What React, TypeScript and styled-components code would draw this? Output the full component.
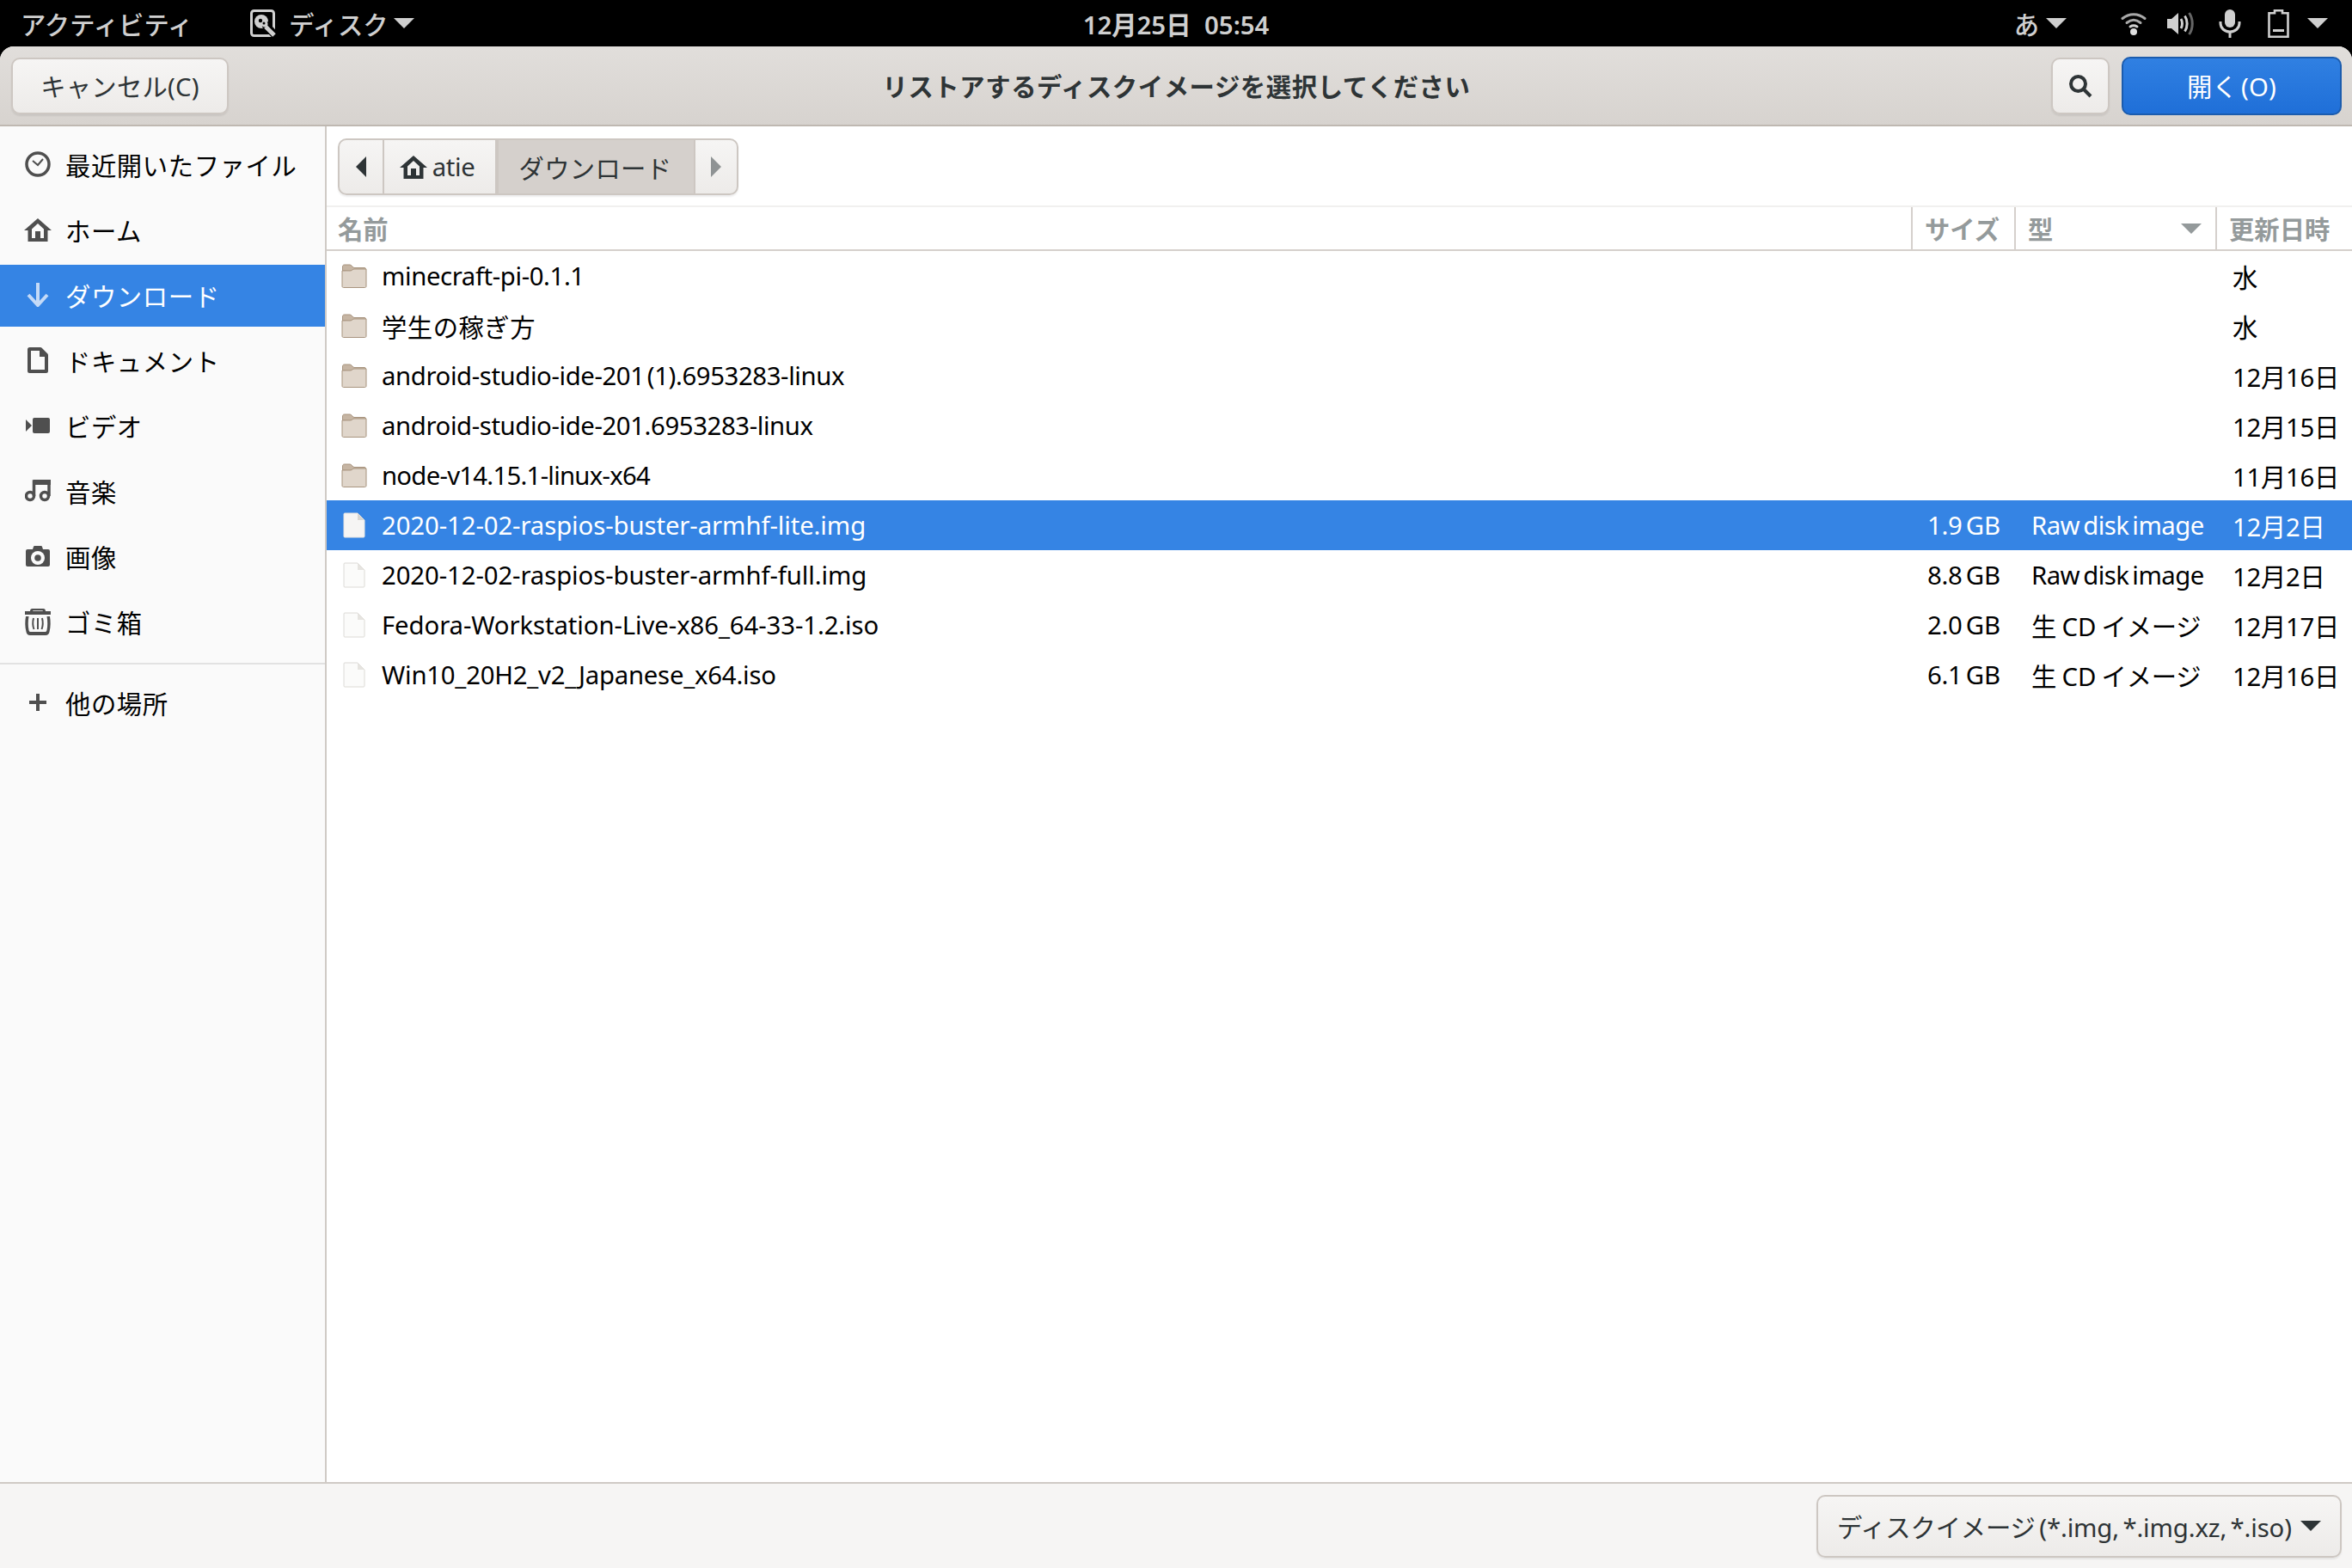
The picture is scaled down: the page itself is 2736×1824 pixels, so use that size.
import React from 'react';
import styled, { createGlobalStyle } from 'styled-components';

const GlobalStyle = createGlobalStyle`
  html, body {
    margin: 0;
    padding: 0;
    background: #000;
  }
  * {
    box-sizing: border-box;
  }
  svg {
    flex: none;
    display: block;
  }
  body {
    font-family: "Noto Sans", "Noto Sans CJK JP", sans-serif;
    font-size: 29.33px;
    color: #000;
  }
`;

const Screen = styled.div`
  width: 2736px;
  height: 1824px;
  display: flex;
  flex-direction: column;
  overflow: hidden;
  background: #000;
`;

const TopBar = styled.div`
  height: 54px;
  flex: none;
  display: grid;
  grid-template-columns: 1fr auto 1fr;
  align-items: center;
  color: #cfcfcf;
  font-size: 29.33px;
  font-weight: 500;
`;

const TopLeft = styled.div`
  display: flex;
  align-items: center;
  padding-left: 24px;
`;

const AppMenu = styled.div`
  display: flex;
  align-items: center;
  margin-left: 67px;
`;

const Clock = styled.div`
  font-weight: 600;
  word-spacing: 8px;
`;

const Tray = styled.div`
  display: flex;
  align-items: center;
  justify-content: flex-end;
  padding-right: 28px;
`;

const Arrow = styled.span<{ $size?: number; $color?: string }>`
  display: inline-block;
  flex: none;
  width: 0;
  height: 0;
  border-left: ${(p) => p.$size ?? 12}px solid transparent;
  border-right: ${(p) => p.$size ?? 12}px solid transparent;
  border-top: ${(p) => p.$size ?? 12}px solid ${(p) => p.$color ?? '#cfcfcf'};
`;

const BarItem = styled.span<{ $left: number }>`
  display: flex;
  align-items: center;
  margin-left: ${(p) => p.$left}px;
`;

const Window = styled.div`
  flex: 1;
  min-height: 0;
  display: flex;
  flex-direction: column;
  background: #fff;
  border-radius: 16px 16px 0 0;
  overflow: hidden;
`;

const HeaderBar = styled.div`
  height: 93px;
  flex: none;
  display: grid;
  grid-template-columns: 1fr auto 1fr;
  align-items: center;
  padding: 0 12px 0 13px;
  background: linear-gradient(#e1dedb, #d7d3cf);
  border-bottom: 2px solid #bfb8b1;
  color: #2e3436;
`;

const HeaderTitle = styled.div`
  font-weight: 700;
  letter-spacing: 0.6px;
`;

const HeaderRight = styled.div`
  display: flex;
  justify-content: flex-end;
  align-items: center;
  gap: 14px;
`;

const Button = styled.div<{ $width: number }>`
  width: ${(p) => p.$width}px;
  height: 66px;
  display: flex;
  align-items: center;
  justify-content: center;
  border: 2px solid #cdc7c2;
  border-radius: 10px;
  background: linear-gradient(#f6f5f4, #edebe9);
  box-shadow: 0 2px 2px rgba(0, 0, 0, 0.07);
  color: #2e3436;
  letter-spacing: 0.2px;
`;

const OpenButton = styled(Button)`
  height: 68px;
  background: linear-gradient(#3080e2, #1f6fd8);
  border-color: #1b5cae;
  color: #fff;
  box-shadow: none;
  word-spacing: -4px;
`;

const Body = styled.div`
  flex: 1;
  min-height: 0;
  display: flex;
`;

const Sidebar = styled.div`
  width: 380px;
  flex: none;
  background: #fafafa;
  border-right: 2px solid #cfcac5;
  padding-top: 9px;
`;

const Place = styled.div<{ $active?: boolean }>`
  height: 72px;
  margin-bottom: 4px;
  padding: 0 0 2px 28px;
  display: flex;
  align-items: center;
  gap: 16px;
  background: ${(p) => (p.$active ? '#3584e4' : 'transparent')};
  color: ${(p) => (p.$active ? '#fff' : '#000')};
  letter-spacing: 0.6px;
`;

const PlaceIcon = styled.span<{ $active?: boolean }>`
  width: 32px;
  height: 32px;
  flex: none;
  display: flex;
  align-items: center;
  justify-content: center;
  color: ${(p) => (p.$active ? '#c4daf7' : '#4f4f4f')};
`;

const PlaceDivider = styled.div`
  height: 2px;
  margin: 11px 0 9px;
  background: #e2e2e2;
`;

const Main = styled.div`
  flex: 1;
  min-width: 0;
  display: flex;
  flex-direction: column;
`;

const PathArea = styled.div`
  height: 94px;
  flex: none;
  padding: 14px 13px;
  border-bottom: 2px solid #f1f0ef;
`;

const PathBar = styled.div`
  display: inline-flex;
  height: 66px;
  border: 2px solid #cdc7c2;
  border-radius: 10px;
  overflow: hidden;
  background: linear-gradient(#f6f5f4, #edebe9);
  box-shadow: 0 2px 2px rgba(0, 0, 0, 0.07);
  color: #2e3436;
`;

const PathArrow = styled.div<{ $width: number }>`
  width: ${(p) => p.$width}px;
  display: flex;
  align-items: center;
  justify-content: center;
`;

const Crumb = styled.div<{ $width: number; $active?: boolean }>`
  width: ${(p) => p.$width}px;
  display: flex;
  align-items: center;
  justify-content: center;
  gap: 6px;
  padding-right: ${(p) => (p.$active ? 2 : 6)}px;
  border-left: 2px solid #cdc7c2;
  border-right: 2px solid #cdc7c2;
  background: ${(p) => (p.$active ? '#d5d0cc' : 'transparent')};
  letter-spacing: ${(p) => (p.$active ? 0.3 : -0.4)}px;
`;

const Triangle = styled.span<{ $dir: 'left' | 'right'; $color: string }>`
  width: 0;
  height: 0;
  border-top: 12px solid transparent;
  border-bottom: 12px solid transparent;
  ${(p) =>
    p.$dir === 'left'
      ? `border-right: 12px solid ${p.$color};`
      : `border-left: 12px solid ${p.$color};`}
`;

const ColumnHeader = styled.div`
  height: 51px;
  flex: none;
  display: grid;
  grid-template-columns: 1845px 120px 234px 1fr;
  border-bottom: 2px solid #d5d0cc;
  color: #949a9b;
  font-weight: 700;
`;

const HeaderCell = styled.div<{ $pad: number }>`
  display: flex;
  align-items: center;
  justify-content: space-between;
  padding-left: ${(p) => p.$pad}px;
  padding-right: 16px;
  border-right: 2px solid #d5d0cc;
  &:last-child {
    border-right: 0;
  }
`;

const FileList = styled.div`
  flex: 1;
  min-height: 0;
`;

const FileRow = styled.div<{ $selected?: boolean }>`
  height: 58px;
  display: grid;
  grid-template-columns: 1845px 120px 234px 1fr;
  align-items: center;
  background: ${(p) => (p.$selected ? '#3584e4' : 'transparent')};
  color: ${(p) => (p.$selected ? '#fff' : '#000')};
  white-space: nowrap;
`;

const NameCell = styled.div<{ $tracking: number }>`
  display: flex;
  align-items: center;
  padding-left: 17px;
  gap: 17px;
  letter-spacing: ${(p) => p.$tracking}px;
  word-spacing: -4px;
`;

const Cell = styled.div<{ $pad: number }>`
  padding-left: ${(p) => p.$pad}px;
  word-spacing: -3px;
  letter-spacing: -0.3px;
`;

const TypeCell = styled.div<{ $raw: boolean }>`
  padding-left: 18px;
  word-spacing: ${(p) => (p.$raw ? -3 : -1)}px;
  letter-spacing: ${(p) => (p.$raw ? -0.55 : -0.2)}px;
`;

const IconSlot = styled.span`
  width: 30px;
  height: 30px;
  flex: none;
  display: flex;
  align-items: center;
  justify-content: center;
`;

const Footer = styled.div`
  height: 100px;
  flex: none;
  display: flex;
  align-items: center;
  justify-content: flex-end;
  padding-right: 12px;
  background: #f6f5f4;
  border-top: 2px solid #cfcac5;
`;

const FilterButton = styled(Button)`
  height: 73px;
  gap: 10px;
  justify-content: flex-start;
  padding-left: 22px;
  white-space: nowrap;
  word-spacing: -3px;
  letter-spacing: -0.15px;
`;

const DiskIcon = () => (
  <svg width="32" height="33" viewBox="0 0 32 33" fill="none">
    <rect x="1.500" y="1.500" width="26" height="29" rx="3" stroke="#cfcfcf" strokeWidth="3" />
    <circle cx="13" cy="14" r="8" fill="#cfcfcf" />
    <circle cx="12" cy="13" r="2.200" fill="#000" />
    <path d="M17 17l12 13" stroke="#000" strokeWidth="9" />
    <path d="M17 17l2 2" stroke="#000" strokeWidth="5" />
    <path d="M18 20l10 10" stroke="#cfcfcf" strokeWidth="5" />
    <circle cx="17" cy="17" r="3.500" fill="#cfcfcf" />
    <circle cx="16" cy="16" r="1.500" fill="#000" />
  </svg>
);

const WifiIcon = () => (
  <svg width="30" height="27" viewBox="0 0 30 27" fill="none" strokeLinecap="round">
    <path d="M2 7.500C9.500 1 20.500 1 28 7.500" stroke="#a8a8a8" strokeWidth="3" />
    <path d="M7 12.500C12 8.500 18 8.500 23 12.500" stroke="#a8a8a8" strokeWidth="3" />
    <path d="M11 17c2.500-1.500 5.500-1.500 8 0" stroke="#cfcfcf" strokeWidth="3" />
    <circle cx="15" cy="23" r="4" fill="#e0e0e0" />
  </svg>
);

const SpeakerIcon = () => (
  <svg width="31" height="29" viewBox="0 0 31 29" fill="none">
    <path d="M0 9h5l8-7v25l-8-7H0z" fill="#cfcfcf" />
    <path d="M16 9c2 3 2 8 0 11" stroke="#cfcfcf" strokeWidth="3" />
    <path d="M20.500 5.500c3.500 5 3.500 13 0 18" stroke="#cfcfcf" strokeWidth="3" />
    <path d="M25.500 2c5 7 5 18 0 25" stroke="#666" strokeWidth="3" />
  </svg>
);

const MicIcon = () => (
  <svg width="26" height="33" viewBox="0 0 26 33" fill="none">
    <rect x="7" y="0" width="12" height="21" rx="6" fill="#cfcfcf" />
    <path d="M2 14v2c0 6 5 10 11 10s11-4 11-10v-2" stroke="#cfcfcf" strokeWidth="3" />
    <path d="M13 26v7" stroke="#cfcfcf" strokeWidth="3" />
  </svg>
);

const BatteryIcon = () => (
  <svg width="25" height="33" viewBox="0 0 25 33" fill="none">
    <path d="M8 1.300h9v3h6.500v27.400h-22V4.300H8z" stroke="#cfcfcf" strokeWidth="2.600" />
    <rect x="6" y="23" width="13" height="3" fill="#cfcfcf" />
  </svg>
);

const SearchIcon = () => (
  <svg width="28" height="28" viewBox="0 0 28 28" fill="none" stroke="#2e3436">
    <circle cx="11.500" cy="11.500" r="8.500" strokeWidth="4" />
    <path d="M18 18l8 8" strokeWidth="4" />
  </svg>
);

const HomeIcon = ({ color = '#4f4f4f' }: { color?: string }) => (
  <svg width="32" height="27" viewBox="0 0 32 27" fill="none">
    <path d="M16 0L0 14h4.500v13h23V14H32zM9 12.500l7-6.500 7 6.500V23h-4v-8h-6v8H9z" fill={color} fillRule="evenodd" />
  </svg>
);

const ClockIcon = () => (
  <svg width="30" height="30" viewBox="0 0 30 30" fill="none" stroke="#4f4f4f">
    <circle cx="15" cy="15" r="13" strokeWidth="3.500" />
    <path d="M9 11l6 5 6-7" strokeWidth="2" />
  </svg>
);

const DownloadIcon = () => (
  <svg width="26" height="28" viewBox="0 0 26 28" fill="none" stroke="currentColor" strokeWidth="4">
    <path d="M13 0v25" />
    <path d="M2 14l11 12 11-12" />
  </svg>
);

const DocIcon = () => (
  <svg width="24" height="30" viewBox="0 0 24 30" fill="none">
    <path
      d="M2 2.500C2 2.200 2.200 2 2.500 2H15l7 7v18.500c0 .3-.2.500-.5.500h-19c-.3 0-.5-.2-.5-.5z"
      stroke="#4f4f4f"
      strokeWidth="4"
      strokeLinejoin="round"
    />
    <path d="M14 1h2l7 7v3h-9z" fill="#4f4f4f" />
  </svg>
);

const VideoIcon = () => (
  <svg width="28" height="18" viewBox="0 0 28 18" fill="#4f4f4f">
    <rect x="8" y="0" width="20" height="18" rx="2" />
    <path d="M0 2l7 7-7 7z" />
  </svg>
);

const MusicIcon = () => (
  <svg width="30" height="26" viewBox="0 0 30 26" fill="none" stroke="#4f4f4f" strokeWidth="3.500">
    <circle cx="6" cy="19" r="4.500" />
    <circle cx="23" cy="19" r="4.500" />
    <path d="M10.500 19V2h17.500v17" />
    <path d="M10 0h20v6H10z" fill="#4f4f4f" strokeWidth="0" />
  </svg>
);

const CameraIcon = () => (
  <svg width="28" height="24" viewBox="0 0 28 24" fill="none">
    <path d="M2 4h6l1-3c.2-.6.600-1 1-1h8c.4 0 .8.400 1 1l1 3h6a2 2 0 0 1 2 2v16a2 2 0 0 1-2 2H2a2 2 0 0 1-2-2V6a2 2 0 0 1 2-2z" fill="#4f4f4f" />
    <circle cx="14" cy="14" r="8" fill="#fafafa" />
    <circle cx="14" cy="14" r="3.800" fill="#4f4f4f" />
  </svg>
);

const TrashIcon = () => (
  <svg width="30" height="32" viewBox="0 0 30 32" fill="none">
    <path d="M0 4h30v4H0z" fill="#4f4f4f" />
    <path d="M6 4c0-2 1-3 2.500-3h13C23 1 24 2 24 4h-3c0-.5-.3-.8-.8-.8H9.800C9.300 3.200 9 3.500 9 4z" fill="#4f4f4f" />
    <path d="M1 10c-1 6-1 12 .5 18 .5 2.500 2 4 4.500 4h18c2.500 0 4-1.500 4.500-4 1.500-6 1.500-12 .5-18h-3.500c1 6 1 11 0 16-.3 1.500-1 2-2 2H6.500c-1 0-1.700-.5-2-2-1-5-1-10 0-16z" fill="#4f4f4f" />
    <path d="M10 12c-1 4-1 9 .5 13M15 12v13M20 12c1 4 1 9-.5 13" stroke="#4f4f4f" strokeWidth="2" />
  </svg>
);

const PlusIcon = () => (
  <svg width="20" height="20" viewBox="0 0 20 20" fill="#4f4f4f">
    <path d="M8 0h4v8h8v4h-8v8H8v-8H0V8h8z" />
  </svg>
);

const FolderIcon = () => (
  <svg width="30" height="28" viewBox="0 0 30 28" fill="none">
    <path d="M1.500 8V3C1.500 2 2.300 1 3.500 1h6.500c2.500 0 3 3.500 5 3.500h12c1 0 1.500.6 1.500 1.500v3z" fill="#c6b5a3" stroke="#a8947f" />
    <path d="M1 8c5 0 7 0 9 0 3 0 3-2 5-2h14v20c0 .8-.6 1.500-1.500 1.500h-25C1.600 27.500 1 26.800 1 26z" fill="#e0d6cb" stroke="#a8947f" />
  </svg>
);

const FileIcon = ({ selected }: { selected?: boolean }) => (
  <svg width="26" height="30" viewBox="0 0 26 30" fill="none">
    <path
      d="M1 2c0-.6.400-1 1-1h15l8 8v19c0 .6-.4 1-1 1H2c-.6 0-1-.4-1-1z"
      fill={selected ? '#f6f5f4' : '#fbfbfa'}
      stroke={selected ? '#e7e5e2' : '#dcdad6'}
    />
    <path d="M17 1v8h8z" fill={selected ? '#d8d6d2' : '#e6e4e0'} />
  </svg>
);

const places = [
  { label: '最近開いたファイル', icon: <ClockIcon /> },
  { label: 'ホーム', icon: <HomeIcon /> },
  { label: 'ダウンロード', icon: <DownloadIcon />, active: true },
  { label: 'ドキュメント', icon: <DocIcon /> },
  { label: 'ビデオ', icon: <VideoIcon /> },
  { label: '音楽', icon: <MusicIcon /> },
  { label: '画像', icon: <CameraIcon /> },
  { label: 'ゴミ箱', icon: <TrashIcon /> },
];

type FileItem = {
  name: string;
  tracking: number;
  folder?: boolean;
  size?: string;
  type?: string;
  date: string;
  selected?: boolean;
};

const files: FileItem[] = [
  { name: 'minecraft-pi-0.1.1', tracking: -0.4, folder: true, date: '水' },
  { name: '学生の稼ぎ方', tracking: 0.5, folder: true, date: '水' },
  { name: 'android-studio-ide-201 (1).6953283-linux', tracking: -0.4, folder: true, date: '12月16日' },
  { name: 'android-studio-ide-201.6953283-linux', tracking: -0.4, folder: true, date: '12月15日' },
  { name: 'node-v14.15.1-linux-x64', tracking: -0.75, folder: true, date: '11月16日' },
  { name: '2020-12-02-raspios-buster-armhf-lite.img', tracking: -0.1, size: '1.9 GB', type: 'Raw disk image', date: '12月2日', selected: true },
  { name: '2020-12-02-raspios-buster-armhf-full.img', tracking: -0.1, size: '8.8 GB', type: 'Raw disk image', date: '12月2日' },
  { name: 'Fedora-Workstation-Live-x86_64-33-1.2.iso', tracking: -0.1, size: '2.0 GB', type: '生 CD イメージ', date: '12月17日' },
  { name: 'Win10_20H2_v2_Japanese_x64.iso', tracking: -0.23, size: '6.1 GB', type: '生 CD イメージ', date: '12月16日' },
];

export default function App() {
  return (
    <Screen>
      <GlobalStyle />
      <TopBar>
        <TopLeft>
          アクティビティ
          <AppMenu>
            <DiskIcon />
            <BarItem $left={13}>ディスク</BarItem>
            <BarItem $left={6}><Arrow /></BarItem>
          </AppMenu>
        </TopLeft>
        <Clock>12月25日 05:54</Clock>
        <Tray>
          あ
          <BarItem $left={8}><Arrow /></BarItem>
          <BarItem $left={63}><WifiIcon /></BarItem>
          <BarItem $left={24}><SpeakerIcon /></BarItem>
          <BarItem $left={29}><MicIcon /></BarItem>
          <BarItem $left={31}><BatteryIcon /></BarItem>
          <BarItem $left={21}><Arrow /></BarItem>
        </Tray>
      </TopBar>
      <Window>
        <HeaderBar>
          <div>
            <Button $width={253}>キャンセル(C)</Button>
          </div>
          <HeaderTitle>リストアするディスクイメージを選択してください</HeaderTitle>
          <HeaderRight>
            <Button $width={68}><SearchIcon /></Button>
            <OpenButton $width={256}>開く (O)</OpenButton>
          </HeaderRight>
        </HeaderBar>
        <Body>
          <Sidebar>
            {places.map((p) => (
              <Place key={p.label} $active={p.active}>
                <PlaceIcon $active={p.active}>{p.icon}</PlaceIcon>
                {p.label}
              </Place>
            ))}
            <PlaceDivider />
            <Place>
              <PlaceIcon><PlusIcon /></PlaceIcon>
              他の場所
            </Place>
          </Sidebar>
          <Main>
            <PathArea>
              <PathBar>
                <PathArrow $width={50}><Triangle $dir="left" $color="#2e3436" /></PathArrow>
                <Crumb $width={133}><HomeIcon color="#2e3436" />atie</Crumb>
                <Crumb $width={231} $active>ダウンロード</Crumb>
                <PathArrow $width={48}><Triangle $dir="right" $color="#8f9394" /></PathArrow>
              </PathBar>
            </PathArea>
            <ColumnHeader>
              <HeaderCell $pad={13}>名前</HeaderCell>
              <HeaderCell $pad={14}>サイズ</HeaderCell>
              <HeaderCell $pad={14}>型<Arrow $color="#949a9b" /></HeaderCell>
              <HeaderCell $pad={14}>更新日時</HeaderCell>
            </ColumnHeader>
            <FileList>
              {files.map((f) => (
                <FileRow key={f.name} $selected={f.selected}>
                  <NameCell $tracking={f.tracking}>
                    <IconSlot>{f.folder ? <FolderIcon /> : <FileIcon selected={f.selected} />}</IconSlot>
                    {f.name}
                  </NameCell>
                  <Cell $pad={17}>{f.size}</Cell>
                  <TypeCell $raw={f.type === 'Raw disk image'}>{f.type}</TypeCell>
                  <Cell $pad={18}>{f.date}</Cell>
                </FileRow>
              ))}
            </FileList>
          </Main>
        </Body>
        <Footer>
          <FilterButton $width={611}>
            ディスクイメージ (*.img, *.img.xz, *.iso)
            <Arrow $color="#2e3436" />
          </FilterButton>
        </Footer>
      </Window>
    </Screen>
  );
}
